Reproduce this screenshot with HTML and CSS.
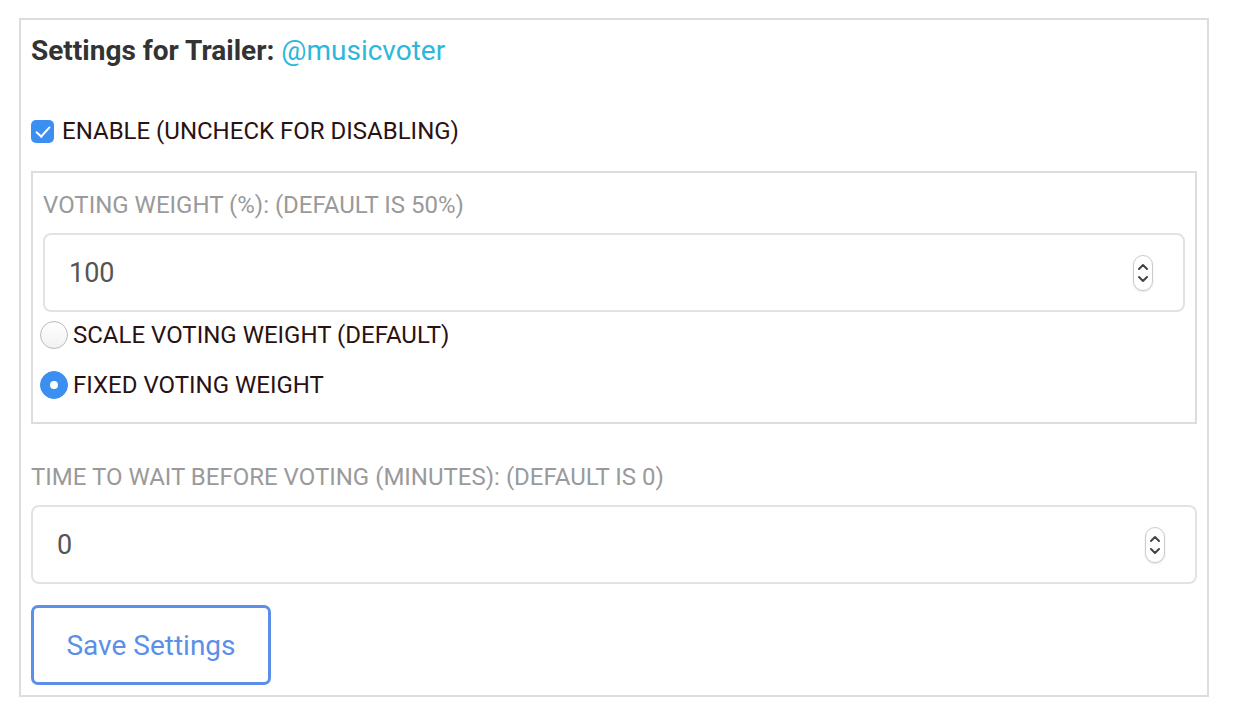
FILE: index.html
```html
<!DOCTYPE html>
<html lang="en">

<head>
    <meta charset="UTF-8">
    <meta name="viewport" content="width=device-width, initial-scale=1.0">
    <title>Trailer Settings</title>
    <link rel="stylesheet" href="styles.css">
</head>

<body>
    <div class="card">
        <h3 class="title">Settings for Trailer: <span class="user">@musicvoter</span></h3>

        <label class="check-row">
            <input type="checkbox" id="enable" checked>
            <span>ENABLE (UNCHECK FOR DISABLING)</span>
        </label>

        <div class="group">
            <label class="field-label" for="weight">VOTING WEIGHT (%): (DEFAULT IS 50%)</label>
            <div class="num-wrap">
                <input type="number" id="weight" class="num" value="100">
                <span class="spin">
                    <svg width="12" height="28" viewBox="0 0 12 28">
                        <path d="M2 10 L6 6 L10 10" fill="none" stroke="#444" stroke-width="2" stroke-linecap="round" stroke-linejoin="round" />
                        <path d="M2 18 L6 22 L10 18" fill="none" stroke="#444" stroke-width="2" stroke-linecap="round" stroke-linejoin="round" />
                    </svg>
                </span>
            </div>
            <label class="radio-row">
                <input type="radio" name="mode" value="scale">
                <span>SCALE VOTING WEIGHT (DEFAULT)</span>
            </label>
            <label class="radio-row">
                <input type="radio" name="mode" value="fixed" checked>
                <span>FIXED VOTING WEIGHT</span>
            </label>
        </div>

        <label class="field-label wait-label" for="wait">TIME TO WAIT BEFORE VOTING (MINUTES): (DEFAULT IS 0)</label>
        <div class="num-wrap">
            <input type="number" id="wait" class="num" value="0">
            <span class="spin">
                <svg width="12" height="28" viewBox="0 0 12 28">
                    <path d="M2 10 L6 6 L10 10" fill="none" stroke="#444" stroke-width="2" stroke-linecap="round" stroke-linejoin="round" />
                    <path d="M2 18 L6 22 L10 18" fill="none" stroke="#444" stroke-width="2" stroke-linecap="round" stroke-linejoin="round" />
                </svg>
            </span>
        </div>

        <button type="button" class="save-btn">Save Settings</button>
    </div>
</body>

</html>
```

FILE: styles.css
```css
* {
    box-sizing: border-box;
}

body {
    margin: 0;
    padding: 0;
    background: #fff;
    font-family: Roboto, "Liberation Sans", sans-serif;
}

.card {
    width: 1190px;
    margin: 18px 0 0 19px;
    border: 2px solid #ddd;
    padding: 11px 10px 10px 10px;
}

.title {
    margin: 0;
    font-size: 28px;
    line-height: 40px;
    font-weight: 700;
    color: #333;
}

.user {
    font-weight: 400;
    color: #2cb8dc;
}

.check-row {
    display: flex;
    align-items: center;
    height: 30px;
    margin-top: 45px;
    font-size: 24px;
    color: #2a1212;
}

.check-row input {
    appearance: none;
    -webkit-appearance: none;
    width: 23px;
    height: 23px;
    margin: 0 8px 0 0;
    border-radius: 5px;
    background: #3d8ef2;
    position: relative;
}

.check-row input::after {
    content: "";
    position: absolute;
    left: 8px;
    top: 3px;
    width: 6px;
    height: 12px;
    border: solid #fff;
    border-width: 0 2px 2px 0;
    transform: rotate(42deg);
}

.group {
    margin-top: 25px;
    border: 2px solid #ddd;
    padding: 16px 10px 23px 10px;
}

.field-label {
    display: block;
    font-size: 24px;
    line-height: 32px;
    color: #9a9a9a;
}

.num-wrap {
    position: relative;
    margin-top: 12px;
}

.num {
    display: block;
    width: 100%;
    height: 79px;
    border: 2px solid #e2e2e2;
    border-radius: 8px;
    padding: 0 24px;
    font-family: Roboto, "Liberation Sans", sans-serif;
    font-size: 27px;
    color: #555;
    outline: none;
    -moz-appearance: textfield;
}

.num::-webkit-inner-spin-button,
.num::-webkit-outer-spin-button {
    -webkit-appearance: none;
    margin: 0;
}

.spin {
    position: absolute;
    right: 32px;
    top: 50%;
    transform: translateY(-50%);
    width: 20px;
    height: 36px;
    border: 1px solid #ccc;
    border-radius: 10px;
    background: #fff;
    box-shadow: 0 1px 2px rgba(0, 0, 0, 0.12);
    display: flex;
    align-items: center;
    justify-content: center;
}

.radio-row {
    display: flex;
    align-items: center;
    height: 28px;
    margin-top: 9px;
    font-size: 24px;
    color: #2a1212;
}

.radio-row + .radio-row {
    margin-top: 22px;
}

.radio-row input {
    appearance: none;
    -webkit-appearance: none;
    width: 28px;
    height: 28px;
    margin: 0 5px 0 -3px;
    border-radius: 50%;
    border: 1px solid #bbb;
    background: linear-gradient(#fff, #f2f2f2);
    position: relative;
}

.radio-row input:checked {
    border-color: #3b8ff0;
    background: #3b8ff0;
}

.radio-row input:checked::after {
    content: "";
    position: absolute;
    left: 50%;
    top: 50%;
    width: 8px;
    height: 8px;
    margin: -4px 0 0 -4px;
    border-radius: 50%;
    background: #fff;
}

.wait-label {
    margin-top: 37px;
}

.save-btn {
    display: block;
    margin-top: 21px;
    width: 240px;
    height: 80px;
    border: 3px solid #5b8fe8;
    border-radius: 7px;
    background: #fff;
    color: #5b8fe8;
    font-family: Roboto, "Liberation Sans", sans-serif;
    font-size: 28px;
    padding: 0;
}
```
